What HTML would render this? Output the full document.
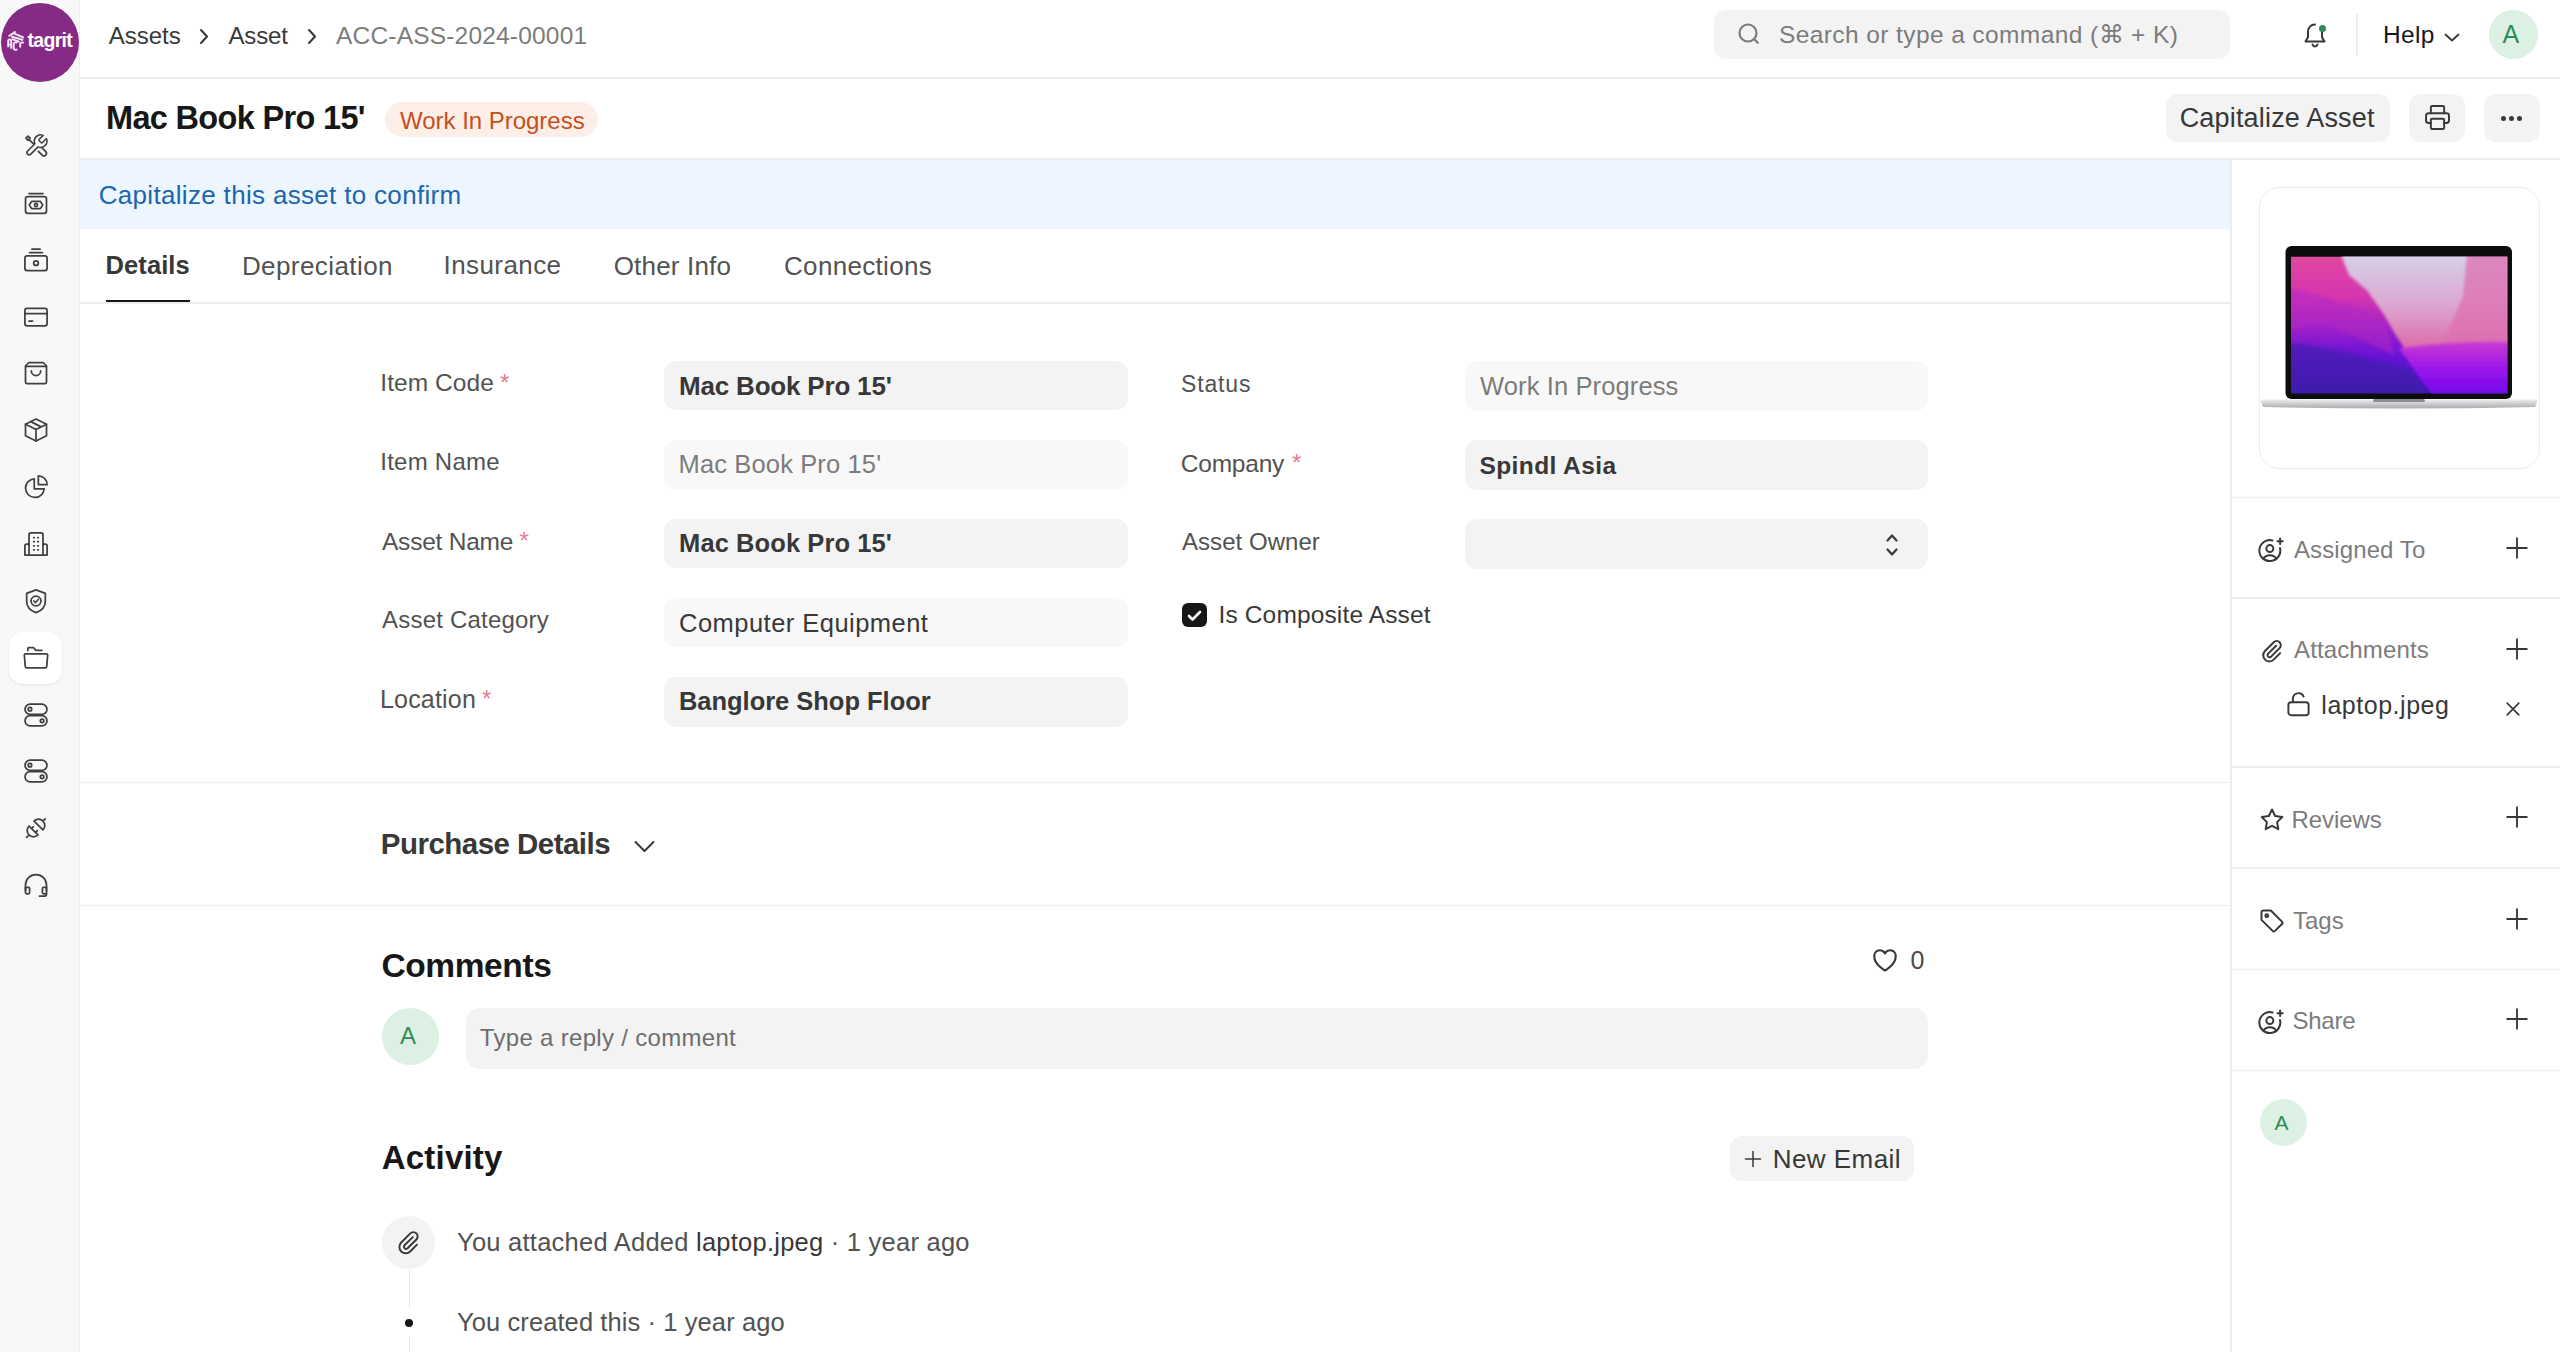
<!DOCTYPE html>
<html><head><meta charset="utf-8"><title>ACC-ASS-2024-00001</title>
<style>
*{box-sizing:border-box;margin:0;padding:0}
html,body{width:2560px;height:1352px;overflow:hidden;background:#fff;font-family:"Liberation Sans",sans-serif}
.t{position:absolute;white-space:nowrap}
.ic{position:absolute}
.b{position:absolute}
</style></head><body>
<!-- left sidebar -->
<div class="b" style="left:0;top:0;width:80px;height:1352px;background:#f8f8f8;border-right:1.5px solid #efefef"></div>
<div class="b" style="left:1px;top:3px;width:78px;height:79px;border-radius:50%;background:#852b85"></div>
<div class="t" style="left:27.5px;top:30.5px;font-size:19.5px;line-height:19.5px;font-weight:bold;color:#fff;letter-spacing:-0.7px">tagrit</div>
<svg class="ic" style="left:4px;top:26px;width:26px;height:28px" viewBox="4 26 26 28" fill="none" stroke="#fde8ff" stroke-width="1.9" stroke-linecap="butt" stroke-linejoin="round"><path d="M8.6 36.2L15.6 31.6M13.2 33.2L23.8 37.6M11 36.3L23.2 40M11.6 38.8L19.5 41.8"/><path d="M8.2 47.2V40.8a1.5 1.5 0 0 1 3 .6v7.4M8.2 44.2l3 .9"/><path d="M17.2 43a2 2 0 0 0-3.5 1.3v3.6a2 2 0 0 0 3.5 1.3"/><path d="M20.2 47.6v-3.8a1.9 1.9 0 0 1 3.4-.6"/></svg>
<div class="b" style="left:9px;top:632px;width:53px;height:52px;border-radius:14px;background:#fff;box-shadow:0 1px 3px rgba(0,0,0,0.08)"></div>
<svg class="ic" style="left:21.5px;top:132.0px;width:28px;height:28px" viewBox="0 0 24 24" fill="none" stroke="#404040" stroke-width="1.5" stroke-linecap="round" stroke-linejoin="round"><g transform="translate(1.6,0.6) scale(0.9)"><path d="M14.7 6.3a1 1 0 0 0 0 1.4l1.6 1.6a1 1 0 0 0 1.4 0l3.77-3.77a6 6 0 0 1-7.94 7.94l-6.91 6.91a2.12 2.12 0 0 1-3-3l6.91-6.91a6 6 0 0 1 7.94-7.94l-3.76 3.76z"/></g><path d="M3.4 5.3L5.2 3.5 7 5.3 5.2 7.1z"/><path d="M6.6 6.9l3.2 3.2M14 16.6l3.3 3.3a2.2 2.2 0 0 0 3.1-3.1l-3-3"/></svg>
<svg class="ic" style="left:21.5px;top:188.8px;width:28px;height:28px" viewBox="0 0 24 24" fill="none" stroke="#404040" stroke-width="1.5" stroke-linecap="round" stroke-linejoin="round"><rect x="3" y="6.6" width="18" height="14.2" rx="2"/><path d="M6 3.9h12"/><path d="M6.3 13.7l1.9-3.1h7.6l1.9 3.1-1.9 3.1H8.2z"/><circle cx="12" cy="13.7" r="1.3"/></svg>
<svg class="ic" style="left:21.5px;top:245.7px;width:28px;height:28px" viewBox="0 0 24 24" fill="none" stroke="#404040" stroke-width="1.5" stroke-linecap="round" stroke-linejoin="round"><rect x="2.5" y="8.5" width="19" height="12.5" rx="2"/><path d="M6.5 5.6h11M8.5 2.7h7"/><circle cx="12" cy="14.7" r="2"/></svg>
<svg class="ic" style="left:21.5px;top:302.6px;width:28px;height:28px" viewBox="0 0 24 24" fill="none" stroke="#404040" stroke-width="1.5" stroke-linecap="round" stroke-linejoin="round"><rect x="2.5" y="4.5" width="19" height="15" rx="2"/><path d="M2.5 9h19M6 15.5h3"/></svg>
<svg class="ic" style="left:21.5px;top:359.4px;width:28px;height:28px" viewBox="0 0 24 24" fill="none" stroke="#404040" stroke-width="1.5" stroke-linecap="round" stroke-linejoin="round"><path d="M5.8 3h12.4L21 6v13.5a1.5 1.5 0 0 1-1.5 1.5h-15A1.5 1.5 0 0 1 3 19.5V6z"/><path d="M3.2 6.3h17.6"/><path d="M8 10.2a4 4 0 0 0 8 0"/></svg>
<svg class="ic" style="left:21.5px;top:416.2px;width:28px;height:28px" viewBox="0 0 24 24" fill="none" stroke="#404040" stroke-width="1.5" stroke-linecap="round" stroke-linejoin="round"><path d="M12 2.5l9 4.5v10l-9 4.5-9-4.5V7z"/><path d="M3 7l9 4.5L21 7M12 11.5v10M7.5 4.8l9 4.5"/></svg>
<svg class="ic" style="left:21.5px;top:473.1px;width:28px;height:28px" viewBox="0 0 24 24" fill="none" stroke="#404040" stroke-width="1.5" stroke-linecap="round" stroke-linejoin="round"><path d="M10.5 5a8 8 0 1 0 8.5 8.5h-8.5z"/><path d="M14 2.5a7.5 7.5 0 0 1 7.5 7.5H14z"/></svg>
<svg class="ic" style="left:21.5px;top:530.0px;width:28px;height:28px" viewBox="0 0 24 24" fill="none" stroke="#404040" stroke-width="1.5" stroke-linecap="round" stroke-linejoin="round"><path d="M6 21.5V4a1.5 1.5 0 0 1 1.5-1.5h9A1.5 1.5 0 0 1 18 4v17.5"/><path d="M6 12H4a1.5 1.5 0 0 0-1.5 1.5v8h19v-8A1.5 1.5 0 0 0 20 12h-2"/><path d="M10 6.5h.5M13.5 6.5h.5M10 10h.5M13.5 10h.5M10 13.5h.5M13.5 13.5h.5M10 17h.5M13.5 17h.5"/></svg>
<svg class="ic" style="left:21.5px;top:586.8px;width:28px;height:28px" viewBox="0 0 24 24" fill="none" stroke="#404040" stroke-width="1.5" stroke-linecap="round" stroke-linejoin="round"><path d="M12 2.5l8 3v6.5c0 5-3.5 8.5-8 10-4.5-1.5-8-5-8-10V5.5z"/><circle cx="12" cy="12" r="4.2"/><path d="M10.2 12l1.3 1.3 2.5-2.6"/></svg>
<svg class="ic" style="left:21.5px;top:643.7px;width:28px;height:28px" viewBox="0 0 24 24" fill="none" stroke="#404040" stroke-width="1.5" stroke-linecap="round" stroke-linejoin="round"><path d="M5 5.5V3.8c0-.5.4-.8.8-.8h3.5c.4 0 .8.2 1 .5l1.2 1.5c.3.3.6.5 1 .5H17"/><path d="M2.8 8.5h18.4c.5 0 .9.4.8.9l-.8 9.8c-.1.8-.7 1.3-1.5 1.3H4.3c-.8 0-1.4-.5-1.5-1.3L2 9.4c-.1-.5.3-.9.8-.9z"/></svg>
<svg class="ic" style="left:21.5px;top:700.5px;width:28px;height:28px" viewBox="0 0 24 24" fill="none" stroke="#404040" stroke-width="1.5" stroke-linecap="round" stroke-linejoin="round"><rect x="2.6" y="2.6" width="18.8" height="8.8" rx="4.4"/><rect x="2.6" y="12.6" width="18.8" height="8.8" rx="4.4"/><circle cx="6.8" cy="7" r="1.5"/><circle cx="17.2" cy="17" r="1.5"/></svg>
<svg class="ic" style="left:21.5px;top:757.4px;width:28px;height:28px" viewBox="0 0 24 24" fill="none" stroke="#404040" stroke-width="1.5" stroke-linecap="round" stroke-linejoin="round"><rect x="2.6" y="2.6" width="18.8" height="8.8" rx="4.4"/><rect x="2.6" y="12.6" width="18.8" height="8.8" rx="4.4"/><circle cx="6.8" cy="7" r="1.5"/><circle cx="17.2" cy="17" r="1.5"/></svg>
<svg class="ic" style="left:21.5px;top:814.2px;width:28px;height:28px" viewBox="0 0 24 24" fill="none" stroke="#404040" stroke-width="1.5" stroke-linecap="round" stroke-linejoin="round"><g transform="rotate(-45 12 12)"><path d="M0.6 12H3.5M9 6.6A5.4 5.4 0 0 0 9 17.4zM9 9.6h2.2M9 14.4h2.2M15 6.6A5.4 5.4 0 0 1 15 17.4zM20.4 12H23.2"/></g></svg>
<svg class="ic" style="left:21.5px;top:871.1px;width:28px;height:28px" viewBox="0 0 24 24" fill="none" stroke="#404040" stroke-width="1.5" stroke-linecap="round" stroke-linejoin="round"><path d="M3 17v-5a9 9 0 0 1 18 0v5"/><path d="M3 14h2.5a1 1 0 0 1 1 1v3.5a1 1 0 0 1-1 1H4a1 1 0 0 1-1-1zM21 14h-2.5a1 1 0 0 0-1 1v3.5a1 1 0 0 0 1 1H20a1 1 0 0 0 1-1zM21 18.5v1.5a1.5 1.5 0 0 1-1.5 1.5H15"/></svg>

<!-- navbar -->
<div class="b" style="left:80px;top:77px;width:2480px;height:1.5px;background:#ededed"></div>
<svg class="ic" style="left:198px;top:28px;width:12px;height:17px" viewBox="0 0 12 17" fill="none" stroke="#383838" stroke-width="2" stroke-linecap="round" stroke-linejoin="round"><path d="M3 2l6 6.5L3 15"/></svg>
<svg class="ic" style="left:305.5px;top:28px;width:12px;height:17px" viewBox="0 0 12 17" fill="none" stroke="#383838" stroke-width="2" stroke-linecap="round" stroke-linejoin="round"><path d="M3 2l6 6.5L3 15"/></svg>
<div class="b" style="left:1714px;top:10px;width:516px;height:49px;border-radius:12px;background:#f3f3f3"></div>
<svg class="ic" style="left:1737px;top:22px;width:26px;height:26px" viewBox="0 0 26 26" fill="none" stroke="#7c7c7c" stroke-width="2.2" stroke-linecap="round"><circle cx="11" cy="11" r="8.5"/><path d="M17.2 17.2l3.6 3.6"/></svg>
<svg class="ic" style="left:2300px;top:20px;width:30px;height:30px" viewBox="0 0 30 30" fill="none" stroke="#383838" stroke-width="2" stroke-linecap="round" stroke-linejoin="round"><path d="M15 4.5c-4.2 0-7 3.2-7 7.2v5.5l-2.5 4.3h19l-2.5-4.3v-5.5c0-1.2-.3-2.3-.8-3.3"/><path d="M12.5 24.5a2.6 2.6 0 0 0 5 0"/></svg>
<div class="b" style="left:2319px;top:25px;width:7px;height:7px;border-radius:50%;background:#2d8d58"></div>
<div class="b" style="left:2356px;top:14px;width:1.5px;height:42px;background:#ededed"></div>
<svg class="ic" style="left:2443px;top:31px;width:18px;height:12px" viewBox="0 0 18 12" fill="none" stroke="#383838" stroke-width="1.8" stroke-linecap="round" stroke-linejoin="round"><path d="M2.5 3.5l6.5 6 6.5-6"/></svg>
<div class="b" style="left:2489px;top:10px;width:49px;height:49px;border-radius:50%;background:#dcf1e3"></div>
<div class="t" style="left:2502.5px;top:22px;font-size:25px;line-height:25px;color:#2d8d58">A</div>

<!-- page head -->
<div class="b" style="left:384.5px;top:102px;width:213.5px;height:35px;border-radius:17.5px;background:#fdeee8"></div>
<div class="b" style="left:2166px;top:94px;width:224px;height:48px;border-radius:12px;background:#f3f3f3"></div>
<div class="b" style="left:2409px;top:94px;width:56px;height:48px;border-radius:12px;background:#f3f3f3"></div>
<div class="b" style="left:2484px;top:94px;width:56px;height:48px;border-radius:12px;background:#f3f3f3"></div>
<svg class="ic" style="left:2423px;top:103px;width:29px;height:29px" viewBox="0 0 24 24" fill="none" stroke="#383838" stroke-width="1.6" stroke-linecap="round" stroke-linejoin="round"><path d="M6.5 8.5V3.5c0-.6.4-1 1-1h9c.6 0 1 .4 1 1v5"/><path d="M6.5 16.5h-2a2 2 0 0 1-2-2v-4a2 2 0 0 1 2-2h15a2 2 0 0 1 2 2v4a2 2 0 0 1-2 2h-2"/><rect x="6.5" y="13" width="11" height="8.5" rx="1"/></svg>
<div class="b" style="left:2501px;top:115.5px;width:5px;height:5px;border-radius:50%;background:#383838"></div>
<div class="b" style="left:2509px;top:115.5px;width:5px;height:5px;border-radius:50%;background:#383838"></div>
<div class="b" style="left:2517px;top:115.5px;width:5px;height:5px;border-radius:50%;background:#383838"></div>
<div class="b" style="left:80px;top:158px;width:2480px;height:1.5px;background:#ededed"></div>

<!-- banner -->
<div class="b" style="left:80px;top:160px;width:2150px;height:69px;background:#edf5fe"></div>
<!-- right sidebar border -->
<div class="b" style="left:2230px;top:159px;width:1.5px;height:1193px;background:#ededed"></div>

<!-- tabs -->
<div class="b" style="left:106px;top:299.5px;width:84px;height:2.5px;background:#171717"></div>
<div class="b" style="left:80px;top:302px;width:2150px;height:1.5px;background:#ededed"></div>

<!-- form inputs -->
<div class="b" style="left:664px;top:360.5px;width:464px;height:49px;border-radius:12px;background:#f3f3f3"></div>
<div class="b" style="left:664px;top:439.5px;width:464px;height:49.5px;border-radius:12px;background:#f8f8f8"></div>
<div class="b" style="left:664px;top:518.5px;width:464px;height:49.5px;border-radius:12px;background:#f3f3f3"></div>
<div class="b" style="left:664px;top:597.5px;width:464px;height:49.5px;border-radius:12px;background:#f8f8f8"></div>
<div class="b" style="left:664px;top:677px;width:464px;height:49.5px;border-radius:12px;background:#f3f3f3"></div>
<div class="b" style="left:1464.5px;top:360.5px;width:463.5px;height:50px;border-radius:12px;background:#f8f8f8"></div>
<div class="b" style="left:1464.5px;top:440px;width:463.5px;height:50px;border-radius:12px;background:#f3f3f3"></div>
<div class="b" style="left:1464.5px;top:518.5px;width:463.5px;height:50px;border-radius:12px;background:#f3f3f3"></div>
<svg class="ic" style="left:1883px;top:530px;width:18px;height:30px" viewBox="0 0 18 30" fill="none" stroke="#383838" stroke-width="2.2" stroke-linecap="round" stroke-linejoin="round"><path d="M4.5 10.5L9 5.5l4.5 5M4.5 19.5L9 24.5l4.5-5"/></svg>
<!-- asterisks -->
<div class="t" style="left:500px;top:371px;font-size:24px;line-height:24px;color:#ea7b95">*</div>
<div class="t" style="left:519.5px;top:529px;font-size:24px;line-height:24px;color:#ea7b95">*</div>
<div class="t" style="left:482px;top:687px;font-size:24px;line-height:24px;color:#ea7b95">*</div>
<div class="t" style="left:1292px;top:451px;font-size:24px;line-height:24px;color:#ea7b95">*</div>
<!-- checkbox -->
<div class="b" style="left:1181.5px;top:602.5px;width:25px;height:24.5px;border-radius:6px;background:#171717"></div>
<svg class="ic" style="left:1181.5px;top:602.5px;width:25px;height:25px" viewBox="0 0 25 25" fill="none" stroke="#fff" stroke-width="2.6" stroke-linecap="round" stroke-linejoin="round"><path d="M7 13l3.5 3.5L18 9"/></svg>

<!-- section lines -->
<div class="b" style="left:80px;top:781.5px;width:2150px;height:1.5px;background:#ededed"></div>
<svg class="ic" style="left:632px;top:836px;width:25px;height:20px" viewBox="0 0 25 20" fill="none" stroke="#383838" stroke-width="2" stroke-linecap="round" stroke-linejoin="round"><path d="M3.5 6l9 9 9-9"/></svg>
<div class="b" style="left:80px;top:904.5px;width:2150px;height:1.5px;background:#ededed"></div>

<!-- comments -->
<svg class="ic" style="left:1870px;top:945px;width:30px;height:30px" viewBox="0 0 24 24" fill="none" stroke="#383838" stroke-width="1.7" stroke-linejoin="round"><path d="M12 20.5s-8.5-5-8.5-11A4.5 4.5 0 0 1 12 6.8a4.5 4.5 0 0 1 8.5 2.7c0 6-8.5 11-8.5 11z"/></svg>
<div class="t" style="left:1910.5px;top:948px;font-size:25px;line-height:25px;color:#4a4a4a">0</div>
<div class="b" style="left:382px;top:1007.5px;width:57px;height:57px;border-radius:50%;background:#dcf1e3"></div>
<div class="t" style="left:400px;top:1023.5px;font-size:24px;line-height:24px;color:#2d8d58">A</div>
<div class="b" style="left:465.5px;top:1007.5px;width:1462px;height:61.5px;border-radius:14px;background:#f3f3f3"></div>

<!-- activity -->
<div class="b" style="left:1730px;top:1135.5px;width:184px;height:45px;border-radius:12px;background:#f3f3f3"></div>
<svg class="ic" style="left:1743px;top:1148.5px;width:20px;height:20px" viewBox="0 0 20 20" fill="none" stroke="#383838" stroke-width="1.5" stroke-linecap="round"><path d="M10 2.5v15M2.5 10h15"/></svg>
<div class="b" style="left:408.5px;top:1268px;width:1.5px;height:40px;background:#e6e6e6"></div>
<div class="b" style="left:408.5px;top:1336px;width:1.5px;height:20px;background:#e6e6e6"></div>
<div class="b" style="left:382px;top:1216px;width:53px;height:53px;border-radius:50%;background:#f3f3f3"></div>
<svg class="ic" style="left:394px;top:1228px;width:29px;height:29px" viewBox="0 0 24 24" fill="none" stroke="#383838" stroke-width="1.6" stroke-linecap="round" stroke-linejoin="round"><path d="M15.5 7.5l-7 7a1.8 1.8 0 0 0 2.5 2.5l7.5-7.5a3.5 3.5 0 0 0-5-5L6 12a5.2 5.2 0 0 0 7.4 7.4l5.6-5.6"/></svg>
<div class="b" style="left:405px;top:1318.5px;width:8px;height:8px;border-radius:50%;background:#171717"></div>

<!-- right sidebar -->
<div class="b" style="left:2258.5px;top:186.5px;width:281px;height:282px;border-radius:20px;border:1.5px solid #ededed;background:#fff"></div>
<svg class="ic" style="left:2259px;top:244px;width:280px;height:166px" viewBox="0 0 280 166">
 <defs>
  <linearGradient id="gL" x1="0" y1="0" x2="0" y2="1"><stop offset="0" stop-color="#e0489f"/><stop offset="0.3" stop-color="#d535b0"/><stop offset="0.5" stop-color="#a421c8"/><stop offset="0.72" stop-color="#6a12d6"/><stop offset="1" stop-color="#3c1ab0"/></linearGradient>
  <linearGradient id="gV" x1="0" y1="0" x2="0" y2="1"><stop offset="0" stop-color="#d5d3ea"/><stop offset="0.45" stop-color="#dba6d0"/><stop offset="0.8" stop-color="#dd6eaa"/><stop offset="1" stop-color="#d85aa8"/></linearGradient>
  <linearGradient id="gR" x1="0" y1="0" x2="0" y2="1"><stop offset="0" stop-color="#c93ad2"/><stop offset="0.5" stop-color="#9a14ec"/><stop offset="1" stop-color="#6a0ae6"/></linearGradient>
  <linearGradient id="gb" x1="0" y1="0" x2="0" y2="1"><stop offset="0" stop-color="#ededef"/><stop offset="1" stop-color="#a9a9ad"/></linearGradient>
  <filter id="bl" x="-5%" y="-5%" width="110%" height="110%"><feGaussianBlur stdDeviation="1.6"/></filter>
  <clipPath id="cp"><rect x="32" y="12.5" width="216.5" height="137"/></clipPath>
 </defs>
 <rect x="26.5" y="2" width="226.5" height="153" rx="6" fill="#0d0d0d"/>
 <g clip-path="url(#cp)">
 <rect x="32" y="12.5" width="216.5" height="137" fill="url(#gL)"/>
 <g filter="url(#bl)">
 <path d="M20 42 Q60 50 96 64 L126 78 L136 112 Q90 88 60 79 Q40 84 20 88 Z" fill="#b025c4" opacity="0.55"/>
 <path d="M20 98 Q60 100 100 112 L150 125 L170 155 L20 155 Z" fill="#3a1aa8" opacity="0.6"/>
 <path d="M81 8 L90 31 L108.5 47 L124.6 70 L136 90 L150 111 L162 126 L255 118 L255 8 Z" fill="url(#gV)"/>
 <path d="M208 8 L255 8 L255 112 L182 106 L192 80 L204 52 Z" fill="#de6fb0" opacity="0.75"/>
 <path d="M140 104 Q200 96 255 98 L255 155 L176 155 Z" fill="url(#gR)"/>
 </g>
 </g>
 <path d="M1 155.5 H279 L276 163 Q140 166 4 163 Z" fill="url(#gb)"/>
 <rect x="114" y="155" width="52" height="3" rx="1.5" fill="#8d8d92"/>
</svg>
<div class="b" style="left:2231px;top:496.5px;width:329px;height:1.5px;background:#ededed"></div>
<div class="b" style="left:2231px;top:597px;width:329px;height:1.5px;background:#ededed"></div>
<div class="b" style="left:2231px;top:766px;width:329px;height:1.5px;background:#ededed"></div>
<div class="b" style="left:2231px;top:867px;width:329px;height:1.5px;background:#ededed"></div>
<div class="b" style="left:2231px;top:968.5px;width:329px;height:1.5px;background:#ededed"></div>
<div class="b" style="left:2231px;top:1069.5px;width:329px;height:1.5px;background:#ededed"></div>
<svg class="ic" style="left:2257px;top:535.5px;width:28px;height:28px" viewBox="0 0 24 24" fill="none" stroke="#383838" stroke-width="1.7" stroke-linecap="round" stroke-linejoin="round"><path d="M13.3 3.8A9 9 0 1 0 19.7 10.2"/><circle cx="11" cy="10.8" r="3"/><path d="M5.5 19.5c1.2-2 3.2-3 5.5-3s4.3 1 5.5 3M19.8 2.2v4.6M17.5 4.5h4.6"/></svg>
<svg class="ic" style="left:2258px;top:637px;width:28px;height:28px" viewBox="0 0 24 24" fill="none" stroke="#383838" stroke-width="1.7" stroke-linecap="round" stroke-linejoin="round"><path d="M15.5 7.5l-7 7a1.8 1.8 0 0 0 2.5 2.5l7.5-7.5a3.5 3.5 0 0 0-5-5L6 12a5.2 5.2 0 0 0 7.4 7.4l5.6-5.6"/></svg>
<svg class="ic" style="left:2258px;top:806px;width:28px;height:28px" viewBox="0 0 24 24" fill="none" stroke="#383838" stroke-width="1.7" stroke-linecap="round" stroke-linejoin="round"><path d="M12 3l2.7 5.6 6.1.9-4.4 4.3 1 6.1L12 17l-5.4 2.9 1-6.1-4.4-4.3 6.1-.9z"/></svg>
<svg class="ic" style="left:2258px;top:907px;width:28px;height:28px" viewBox="0 0 24 24" fill="none" stroke="#383838" stroke-width="1.7" stroke-linecap="round" stroke-linejoin="round"><path d="M3 4.5V11l9.5 9.5a1.5 1.5 0 0 0 2.1 0l5.9-5.9a1.5 1.5 0 0 0 0-2.1L11 3H4.5A1.5 1.5 0 0 0 3 4.5z"/><circle cx="7.5" cy="7.5" r="1.2"/></svg>
<svg class="ic" style="left:2257px;top:1008px;width:28px;height:28px" viewBox="0 0 24 24" fill="none" stroke="#383838" stroke-width="1.7" stroke-linecap="round" stroke-linejoin="round"><path d="M13.3 3.8A9 9 0 1 0 19.7 10.2"/><circle cx="11" cy="10.8" r="3"/><path d="M5.5 19.5c1.2-2 3.2-3 5.5-3s4.3 1 5.5 3M19.8 2.2v4.6M17.5 4.5h4.6"/></svg>
<svg class="ic" style="left:2503.4px;top:533.5px;width:28px;height:28px" viewBox="0 0 24 24" fill="none" stroke="#383838" stroke-width="1.6" stroke-linecap="round" stroke-linejoin="round"><path d="M12 3.6v16.8M3.6 12h16.8"/></svg>
<svg class="ic" style="left:2503.4px;top:634.6px;width:28px;height:28px" viewBox="0 0 24 24" fill="none" stroke="#383838" stroke-width="1.6" stroke-linecap="round" stroke-linejoin="round"><path d="M12 3.6v16.8M3.6 12h16.8"/></svg>
<svg class="ic" style="left:2503.4px;top:803.2px;width:28px;height:28px" viewBox="0 0 24 24" fill="none" stroke="#383838" stroke-width="1.6" stroke-linecap="round" stroke-linejoin="round"><path d="M12 3.6v16.8M3.6 12h16.8"/></svg>
<svg class="ic" style="left:2503.4px;top:904.6px;width:28px;height:28px" viewBox="0 0 24 24" fill="none" stroke="#383838" stroke-width="1.6" stroke-linecap="round" stroke-linejoin="round"><path d="M12 3.6v16.8M3.6 12h16.8"/></svg>
<svg class="ic" style="left:2503.4px;top:1005.3px;width:28px;height:28px" viewBox="0 0 24 24" fill="none" stroke="#383838" stroke-width="1.6" stroke-linecap="round" stroke-linejoin="round"><path d="M12 3.6v16.8M3.6 12h16.8"/></svg>
<svg class="ic" style="left:2285px;top:691px;width:27px;height:27px" viewBox="0 0 24 24" fill="none" stroke="#383838" stroke-width="1.7" stroke-linecap="round" stroke-linejoin="round"><rect x="3" y="10" width="18" height="11.5" rx="2.5"/><path d="M7 10V7a5 5 0 0 1 9.6-2"/></svg>
<svg class="ic" style="left:2502.5px;top:698.5px;width:20px;height:20px" viewBox="0 0 24 24" fill="none" stroke="#383838" stroke-width="2" stroke-linecap="round" stroke-linejoin="round"><path d="M5 5l14 14M19 5L5 19"/></svg>
<div class="b" style="left:2259.5px;top:1099px;width:47px;height:47px;border-radius:50%;background:#dcf1e3"></div>
<div class="t" style="left:2274.5px;top:1112px;font-size:21px;line-height:21px;color:#2d8d58">A</div>

<div class="t" style="left:108.8px;top:24.0px;font-size:24.0px;line-height:24.0px;letter-spacing:-0.01px;color:#383838;">Assets</div>
<div class="t" style="left:228.5px;top:24.0px;font-size:24.0px;line-height:24.0px;letter-spacing:-0.14px;color:#383838;">Asset</div>
<div class="t" style="left:336.0px;top:23.5px;font-size:24.5px;line-height:24.5px;letter-spacing:0.19px;color:#7c7c7c;">ACC-ASS-2024-00001</div>
<div class="t" style="left:1779.0px;top:22.8px;font-size:24.5px;line-height:24.5px;letter-spacing:0.4px;color:#7c7c7c;">Search or type a command (⌘ + K)</div>
<div class="t" style="left:2383.0px;top:23.0px;font-size:24.5px;line-height:24.5px;letter-spacing:0.32px;color:#171717;">Help</div>
<div class="t" style="left:106.0px;top:101.7px;font-size:32.5px;line-height:32.5px;letter-spacing:-0.67px;color:#171717;font-weight:bold;">Mac Book Pro 15'</div>
<div class="t" style="left:400.0px;top:108.9px;font-size:24.0px;line-height:24.0px;letter-spacing:-0.02px;color:#c4501d;">Work In Progress</div>
<div class="t" style="left:2179.7px;top:104.6px;font-size:27.0px;line-height:27.0px;letter-spacing:0.18px;color:#383838;">Capitalize Asset</div>
<div class="t" style="left:98.7px;top:182.0px;font-size:26.0px;line-height:26.0px;letter-spacing:0.32px;color:#1c66ad;">Capitalize this asset to confirm</div>
<div class="t" style="left:105.5px;top:252.9px;font-size:25.5px;line-height:25.5px;letter-spacing:0.1px;color:#383838;font-weight:bold;">Details</div>
<div class="t" style="left:241.9px;top:252.5px;font-size:26.0px;line-height:26.0px;letter-spacing:0.42px;color:#525252;">Depreciation</div>
<div class="t" style="left:613.7px;top:252.5px;font-size:26.0px;line-height:26.0px;letter-spacing:0.18px;color:#525252;">Other Info</div>
<div class="t" style="left:784.0px;top:252.5px;font-size:26.0px;line-height:26.0px;letter-spacing:0.32px;color:#525252;">Connections</div>
<div class="t" style="left:380.3px;top:371.4px;font-size:24.5px;line-height:24.5px;letter-spacing:0.07px;color:#525252;">Item Code</div>
<div class="t" style="left:380.3px;top:450.0px;font-size:24.0px;line-height:24.0px;letter-spacing:0.24px;color:#525252;">Item Name</div>
<div class="t" style="left:382.0px;top:529.8px;font-size:24.5px;line-height:24.5px;letter-spacing:-0.23px;color:#525252;">Asset Name</div>
<div class="t" style="left:382.0px;top:608.0px;font-size:24.0px;line-height:24.0px;letter-spacing:0.21px;color:#525252;">Asset Category</div>
<div class="t" style="left:380.0px;top:687.4px;font-size:25.0px;line-height:25.0px;letter-spacing:0.18px;color:#525252;">Location</div>
<div class="t" style="left:679.0px;top:372.9px;font-size:26.0px;line-height:26.0px;letter-spacing:-0.19px;color:#383838;font-weight:bold;">Mac Book Pro 15'</div>
<div class="t" style="left:678.6px;top:451.9px;font-size:25.5px;line-height:25.5px;letter-spacing:0.13px;color:#7c7c7c;">Mac Book Pro 15'</div>
<div class="t" style="left:679.1px;top:531.1px;font-size:25.5px;line-height:25.5px;letter-spacing:0.08px;color:#383838;font-weight:bold;">Mac Book Pro 15'</div>
<div class="t" style="left:679.1px;top:610.5px;font-size:25.5px;line-height:25.5px;letter-spacing:0.46px;color:#383838;">Computer Equipment</div>
<div class="t" style="left:678.9px;top:689.3px;font-size:25.5px;line-height:25.5px;letter-spacing:-0.02px;color:#383838;font-weight:bold;">Banglore Shop Floor</div>
<div class="t" style="left:1181.1px;top:373.2px;font-size:23.0px;line-height:23.0px;letter-spacing:0.82px;color:#525252;">Status</div>
<div class="t" style="left:1180.8px;top:451.6px;font-size:24.5px;line-height:24.5px;letter-spacing:-0.22px;color:#525252;">Company</div>
<div class="t" style="left:1182.0px;top:529.7px;font-size:24.0px;line-height:24.0px;letter-spacing:0.04px;color:#525252;">Asset Owner</div>
<div class="t" style="left:1480.0px;top:374.1px;font-size:25.5px;line-height:25.5px;letter-spacing:0.12px;color:#7c7c7c;">Work In Progress</div>
<div class="t" style="left:1479.5px;top:453.7px;font-size:24.5px;line-height:24.5px;letter-spacing:0.4px;color:#383838;font-weight:bold;">Spindl Asia</div>
<div class="t" style="left:1218.5px;top:602.8px;font-size:24.5px;line-height:24.5px;letter-spacing:0.14px;color:#383838;">Is Composite Asset</div>
<div class="t" style="left:380.8px;top:829.0px;font-size:29.5px;line-height:29.5px;letter-spacing:-0.53px;color:#383838;font-weight:bold;">Purchase Details</div>
<div class="t" style="left:381.4px;top:949.1px;font-size:33.5px;line-height:33.5px;letter-spacing:-0.38px;color:#171717;font-weight:bold;">Comments</div>
<div class="t" style="left:479.8px;top:1026.0px;font-size:24.0px;line-height:24.0px;letter-spacing:0.31px;color:#6e6e6e;">Type a reply / comment</div>
<div class="t" style="left:381.8px;top:1141.3px;font-size:33.0px;line-height:33.0px;letter-spacing:0.19px;color:#171717;font-weight:bold;">Activity</div>
<div class="t" style="left:1772.7px;top:1145.7px;font-size:26.0px;line-height:26.0px;letter-spacing:0.46px;color:#383838;">New Email</div>
<div class="t" style="left:457.0px;top:1230.2px;font-size:25.5px;line-height:25.5px;letter-spacing:0.24px;color:#525252;">You attached Added <span style="color:#383838">laptop.jpeg</span> · 1 year ago</div>
<div class="t" style="left:457.0px;top:1310.2px;font-size:25.5px;line-height:25.5px;letter-spacing:0.09px;color:#525252;">You created this · 1 year ago</div>
<div class="t" style="left:2294.0px;top:537.9px;font-size:24.0px;line-height:24.0px;letter-spacing:0.1px;color:#7c7c7c;">Assigned To</div>
<div class="t" style="left:2294.0px;top:637.7px;font-size:24.0px;line-height:24.0px;letter-spacing:0.13px;color:#7c7c7c;">Attachments</div>
<div class="t" style="left:2321.3px;top:692.9px;font-size:25.0px;line-height:25.0px;letter-spacing:0.53px;color:#383838;">laptop.jpeg</div>
<div class="t" style="left:2291.6px;top:808.0px;font-size:24.0px;line-height:24.0px;letter-spacing:-0.09px;color:#7c7c7c;">Reviews</div>
<div class="t" style="left:2293.0px;top:908.7px;font-size:24.0px;line-height:24.0px;letter-spacing:0.0px;color:#7c7c7c;">Tags</div>
<div class="t" style="left:2292.5px;top:1009.2px;font-size:24.0px;line-height:24.0px;letter-spacing:-0.25px;color:#7c7c7c;">Share</div>
<div class="t" style="left:443.5px;top:251.9px;font-size:26.0px;line-height:26.0px;letter-spacing:0.42px;color:#525252">Insurance</div>
</body></html>
